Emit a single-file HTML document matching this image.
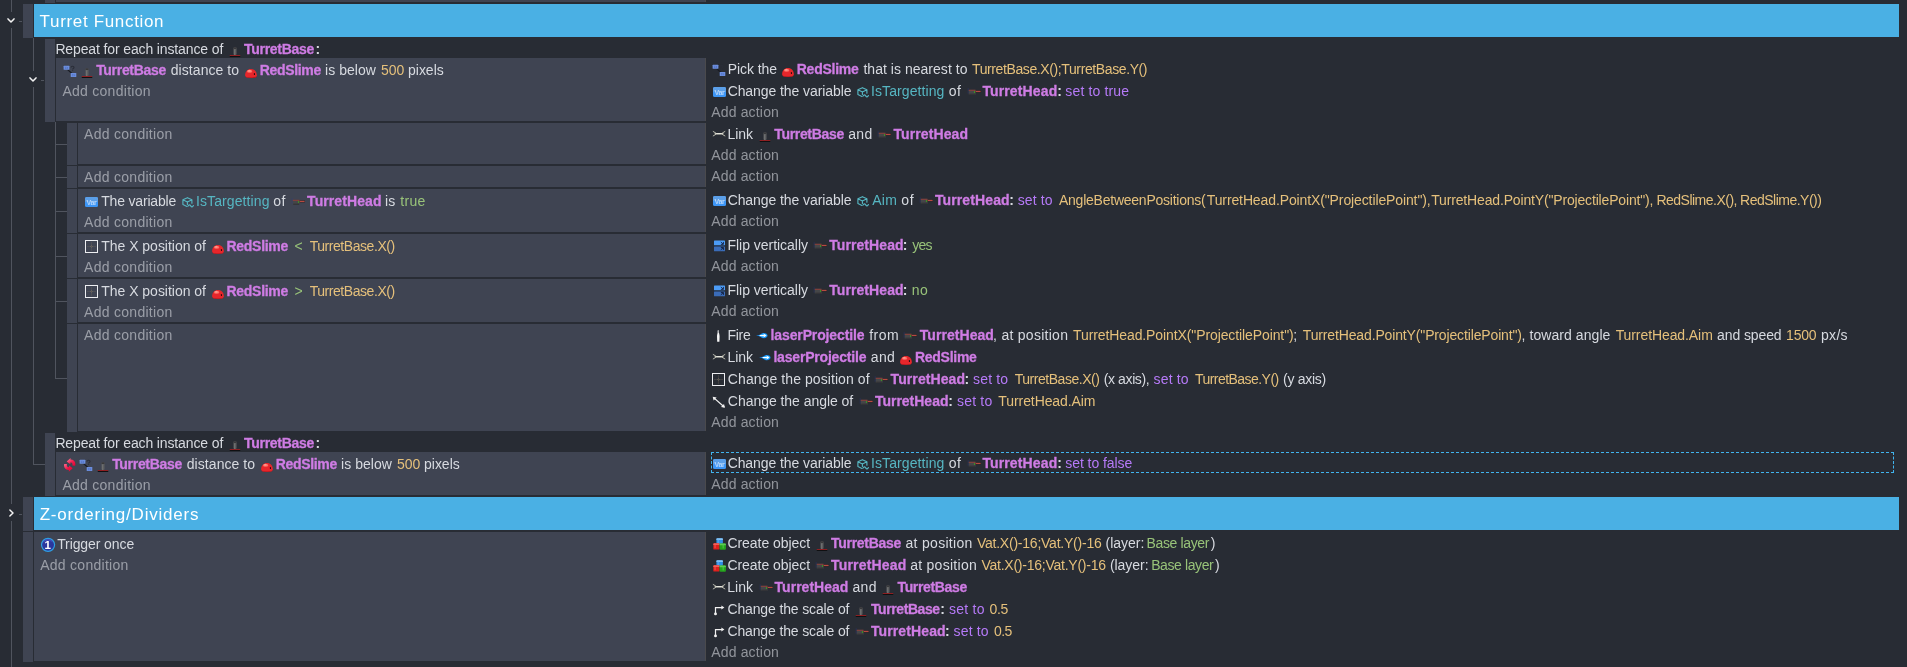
<!DOCTYPE html>
<html lang="en"><head><meta charset="utf-8"><title>Events sheet</title>
<style>
html,body{margin:0;padding:0;}
body{width:1907px;height:667px;overflow:hidden;background:#282c34;position:relative;
 font-family:"Liberation Sans", sans-serif;font-size:14px;color:#d6d9e0;}
.b{position:absolute;}
#t{position:absolute;left:0;top:0;width:1907px;height:667px;will-change:transform;}
.r{position:absolute;height:22px;line-height:22px;white-space:pre;}
.n{color:#d7dae0;}
.o{color:#cf7ce4;font-weight:bold;-webkit-text-stroke:0.3px #cf7ce4;}
.a{color:#d7dae0;opacity:0.6;}
.e{color:#e5c07b;}
.g{color:#98c379;}
.v{color:#56b6c2;}
.p{color:#b67af8;}
.c{color:#d7dae0;font-weight:bold;}
.h{color:#ffffff;font-size:17px;height:34px;line-height:34px;}
.ic{position:absolute;width:16px;height:16px;line-height:0;}
.ic svg{display:block;overflow:visible;}
.ic text{font-family:"Liberation Sans",sans-serif;}
</style></head>
<body>
<div class="b" style="left:11px;top:0px;width:1px;height:12px;background:#50545e;"></div>
<div class="b" style="left:11px;top:28px;width:1px;height:476px;background:#50545e;"></div>
<div class="b" style="left:11px;top:521px;width:1px;height:146px;background:#50545e;"></div>
<div class="b" style="left:19px;top:21px;width:3px;height:1px;background:#50545e;"></div>
<div class="b" style="left:19px;top:514px;width:3px;height:1px;background:#50545e;"></div>
<div class="b" style="left:33px;top:38px;width:1px;height:33px;background:#50545e;"></div>
<div class="b" style="left:33px;top:87px;width:1px;height:377px;background:#50545e;"></div>
<div class="b" style="left:33px;top:464px;width:12px;height:1px;background:#50545e;"></div>
<div class="b" style="left:41px;top:80px;width:3px;height:1px;background:#50545e;"></div>
<div class="b" style="left:55px;top:122px;width:1px;height:256px;background:#50545e;"></div>
<div class="b" style="left:55px;top:144px;width:12px;height:1px;background:#50545e;"></div>
<div class="b" style="left:55px;top:177px;width:12px;height:1px;background:#50545e;"></div>
<div class="b" style="left:55px;top:211px;width:12px;height:1px;background:#50545e;"></div>
<div class="b" style="left:55px;top:256px;width:12px;height:1px;background:#50545e;"></div>
<div class="b" style="left:55px;top:301px;width:12px;height:1px;background:#50545e;"></div>
<div class="b" style="left:55px;top:378px;width:12px;height:1px;background:#50545e;"></div>
<div class="b" style="left:45px;top:0px;width:10px;height:3px;background:#3f4452;"></div>
<div class="b" style="left:56px;top:0px;width:649px;height:2px;background:#3f4452;"></div>
<div class="b" style="left:705px;top:0px;width:1px;height:2px;background:#4a4a4d;"></div>
<div class="b" style="left:23px;top:4px;width:10px;height:34px;background:#3f4452;"></div>
<div class="b" style="left:34px;top:4px;width:1865px;height:33px;background:#4ab0e4;"></div>
<div class="b" style="left:45px;top:39px;width:10px;height:83px;background:#3f4452;"></div>
<div class="b" style="left:56px;top:58px;width:649px;height:63px;background:#3f4452;"></div>
<div class="b" style="left:705px;top:58px;width:1px;height:63px;background:#4a4a4d;"></div>
<div class="b" style="left:67px;top:123px;width:10px;height:42px;background:#3f4452;"></div>
<div class="b" style="left:78px;top:123px;width:627px;height:41px;background:#3f4452;"></div>
<div class="b" style="left:705px;top:123px;width:1px;height:41px;background:#4a4a4d;"></div>
<div class="b" style="left:67px;top:166px;width:10px;height:22px;background:#3f4452;"></div>
<div class="b" style="left:78px;top:166px;width:627px;height:21px;background:#3f4452;"></div>
<div class="b" style="left:705px;top:166px;width:1px;height:21px;background:#4a4a4d;"></div>
<div class="b" style="left:67px;top:189px;width:10px;height:44px;background:#3f4452;"></div>
<div class="b" style="left:78px;top:189px;width:627px;height:43px;background:#3f4452;"></div>
<div class="b" style="left:705px;top:189px;width:1px;height:43px;background:#4a4a4d;"></div>
<div class="b" style="left:67px;top:234px;width:10px;height:44px;background:#3f4452;"></div>
<div class="b" style="left:78px;top:234px;width:627px;height:43px;background:#3f4452;"></div>
<div class="b" style="left:705px;top:234px;width:1px;height:43px;background:#4a4a4d;"></div>
<div class="b" style="left:67px;top:279px;width:10px;height:44px;background:#3f4452;"></div>
<div class="b" style="left:78px;top:279px;width:627px;height:43px;background:#3f4452;"></div>
<div class="b" style="left:705px;top:279px;width:1px;height:43px;background:#4a4a4d;"></div>
<div class="b" style="left:67px;top:324px;width:10px;height:108px;background:#3f4452;"></div>
<div class="b" style="left:78px;top:324px;width:627px;height:107px;background:#3f4452;"></div>
<div class="b" style="left:705px;top:324px;width:1px;height:107px;background:#4a4a4d;"></div>
<div class="b" style="left:45px;top:433px;width:10px;height:63px;background:#3f4452;"></div>
<div class="b" style="left:56px;top:452px;width:649px;height:43px;background:#3f4452;"></div>
<div class="b" style="left:705px;top:452px;width:1px;height:43px;background:#4a4a4d;"></div>
<div class="b" style="left:23px;top:497px;width:10px;height:34px;background:#3f4452;"></div>
<div class="b" style="left:34px;top:497px;width:1865px;height:33px;background:#4ab0e4;"></div>
<div class="b" style="left:23px;top:532px;width:10px;height:130px;background:#3f4452;"></div>
<div class="b" style="left:34px;top:532px;width:671px;height:129px;background:#3f4452;"></div>
<div class="b" style="left:705px;top:532px;width:1px;height:129px;background:#4a4a4d;"></div>
<div class="b" style="left:711px;top:452px;width:1183px;height:21px;border:1px dashed #41b4ee;box-sizing:border-box"></div>
<svg class="b" style="left:0;top:0" width="60" height="667" viewBox="0 0 60 667"><path d="M8 18.9 L11 22.0 L14 18.9" fill="none" stroke="#f2f2f2" stroke-width="1.5" stroke-linecap="round" stroke-linejoin="round"/></svg>
<svg class="b" style="left:0;top:0" width="60" height="667" viewBox="0 0 60 667"><path d="M30 77.9 L33 81.0 L36 77.9" fill="none" stroke="#f2f2f2" stroke-width="1.5" stroke-linecap="round" stroke-linejoin="round"/></svg>
<svg class="b" style="left:0;top:0" width="60" height="667" viewBox="0 0 60 667"><path d="M9.9 510 L13.0 513 L9.9 516" fill="none" stroke="#f2f2f2" stroke-width="1.5" stroke-linecap="round" stroke-linejoin="round"/></svg>
<div id="t">
<span class="r h" style="left:39.62px;top:5px;letter-spacing:0.663px">Turret Function</span>
<span class="r n" style="left:55.38px;top:38px;letter-spacing:-0.128px">Repeat for each instance of</span>
<span class="ic" style="left:227px;top:41px"><svg width="16" height="16" viewBox="0 0 16 16"><rect x="6.5" y="6.3" width="3" height="7.8" rx="1" fill="#5e5f60"/><path d="M6.5 8.1V7.3a1 1 0 0 1 1-1h1a1 1 0 0 1 1 1v0.8z" fill="#38393c"/><rect x="7.1" y="8.4" width="0.9" height="5.6" fill="#707172"/><rect x="2.75" y="14" width="10.5" height="1" fill="#8f1f22"/><rect x="2.75" y="15" width="10.5" height="1" fill="#0f1012"/></svg></span>
<span class="r o" style="left:244.07px;top:38px;letter-spacing:-0.306px">TurretBase</span>
<span class="r c" style="left:315.52px;top:38px;letter-spacing:0px">:</span>
<span class="ic" style="left:711px;top:61px"><svg width="16" height="16" viewBox="0 0 16 16"><path d="M5.6 7.6 L10 11.5" stroke="#191b22" stroke-width="1.25" fill="none"/><rect x="1.6" y="3.8" width="5.8" height="4" rx="0.5" fill="#6c8fde"/><rect x="8.7" y="11.1" width="5.6" height="4" rx="0.5" fill="#6c8fde"/><path d="M2.9 5.3h1.6M2.9 6.5h1.6M5.5 5v1.9" stroke="#4f6fc0" stroke-width="0.7" fill="none"/><path d="M10 12.6h1.6M10 13.8h1.6M12.6 12.3v1.9" stroke="#4f6fc0" stroke-width="0.7" fill="none"/><path d="M9.1 5.4c0-1.6 2.9-1.6 2.9 0c0 1.1-1.4 1-1.4 2.1M10.6 8.2v0.8" stroke="#2b2e38" stroke-width="1.15" fill="none"/></svg></span>
<span class="r n" style="left:727.67px;top:58px;letter-spacing:-0.057px">Pick the</span>
<span class="ic" style="left:780px;top:61px"><svg width="16" height="16" viewBox="0 0 16 16"><path d="M2.1 13.6c0-4.3 2.5-6.7 5.9-6.7s5.9 2.4 5.9 6.7c0 1.7-2.4 2.5-5.9 2.5s-5.9-0.8-5.9-2.5z" fill="#e7262b"/><path d="M2.2 14c0.7 1.1 2.9 1.5 5.8 1.5s5.1-0.4 5.8-1.5c-0.2 1.5-2.5 2.1-5.8 2.1s-5.6-0.6-5.8-2.1z" fill="#b3121a"/><ellipse cx="6.6" cy="9.3" rx="2.7" ry="1.5" fill="#ff6f66"/><ellipse cx="6.3" cy="8.9" rx="1.4" ry="0.7" fill="#ffa79b"/><rect x="10.9" y="11" width="1.1" height="2.1" rx="0.5" fill="#2c0a10"/></svg></span>
<span class="r o" style="left:796.73px;top:58px;letter-spacing:-0.243px">RedSlime</span>
<span class="r n" style="left:863.45px;top:58px;letter-spacing:0.028px">that is nearest to</span>
<span class="r e" style="left:972.05px;top:58px;letter-spacing:-0.392px">TurretBase.X();TurretBase.Y()</span>
<span class="ic" style="left:62px;top:62px"><svg width="16" height="16" viewBox="0 0 16 16"><path d="M5.6 7.6 L10 11.5" stroke="#191b22" stroke-width="1.25" fill="none"/><rect x="1.6" y="3.8" width="5.8" height="4" rx="0.5" fill="#6c8fde"/><rect x="8.7" y="11.1" width="5.6" height="4" rx="0.5" fill="#6c8fde"/><path d="M2.9 5.3h1.6M2.9 6.5h1.6M5.5 5v1.9" stroke="#4f6fc0" stroke-width="0.7" fill="none"/><path d="M10 12.6h1.6M10 13.8h1.6M12.6 12.3v1.9" stroke="#4f6fc0" stroke-width="0.7" fill="none"/><path d="M9.1 5.4c0-1.6 2.9-1.6 2.9 0c0 1.1-1.4 1-1.4 2.1M10.6 8.2v0.8" stroke="#2b2e38" stroke-width="1.15" fill="none"/></svg></span>
<span class="ic" style="left:79px;top:62px"><svg width="16" height="16" viewBox="0 0 16 16"><rect x="6.5" y="6.3" width="3" height="7.8" rx="1" fill="#5e5f60"/><path d="M6.5 8.1V7.3a1 1 0 0 1 1-1h1a1 1 0 0 1 1 1v0.8z" fill="#38393c"/><rect x="7.1" y="8.4" width="0.9" height="5.6" fill="#707172"/><rect x="2.75" y="14" width="10.5" height="1" fill="#8f1f22"/><rect x="2.75" y="15" width="10.5" height="1" fill="#0f1012"/></svg></span>
<span class="r o" style="left:96.17px;top:59px;letter-spacing:-0.306px">TurretBase</span>
<span class="r n" style="left:170.78px;top:59px;letter-spacing:0.06px">distance to</span>
<span class="ic" style="left:243px;top:62px"><svg width="16" height="16" viewBox="0 0 16 16"><path d="M2.1 13.6c0-4.3 2.5-6.7 5.9-6.7s5.9 2.4 5.9 6.7c0 1.7-2.4 2.5-5.9 2.5s-5.9-0.8-5.9-2.5z" fill="#e7262b"/><path d="M2.2 14c0.7 1.1 2.9 1.5 5.8 1.5s5.1-0.4 5.8-1.5c-0.2 1.5-2.5 2.1-5.8 2.1s-5.6-0.6-5.8-2.1z" fill="#b3121a"/><ellipse cx="6.6" cy="9.3" rx="2.7" ry="1.5" fill="#ff6f66"/><ellipse cx="6.3" cy="8.9" rx="1.4" ry="0.7" fill="#ffa79b"/><rect x="10.9" y="11" width="1.1" height="2.1" rx="0.5" fill="#2c0a10"/></svg></span>
<span class="r o" style="left:259.82px;top:59px;letter-spacing:-0.343px">RedSlime</span>
<span class="r n" style="left:325.12px;top:59px;letter-spacing:0.036px">is below</span>
<span class="r e" style="left:380.88px;top:59px;letter-spacing:0.025px">500</span>
<span class="r n" style="left:408.02px;top:59px;letter-spacing:-0.015px">pixels</span>
<span class="r a" style="left:62.38px;top:80px;letter-spacing:0.277px">Add condition</span>
<span class="ic" style="left:712px;top:83px"><svg width="16" height="16" viewBox="0 0 16 16"><rect x="1" y="4" width="13" height="10" rx="1.5" fill="#3d96f6"/><path d="M1 9V5.5a1.5 1.5 0 0 1 1.5-1.5h10a1.5 1.5 0 0 1 1.5 1.5v3.5z" fill="#5b9fe8"/><text x="7.5" y="12" font-size="7" font-weight="bold" text-anchor="middle" fill="#d2e5fc" fill-opacity="0.8" letter-spacing="-0.3">Var</text></svg></span>
<span class="r n" style="left:727.65px;top:80px;letter-spacing:-0.083px">Change the variable</span>
<span class="ic" style="left:855px;top:83px"><svg width="16" height="16" viewBox="0 0 16 16"><g fill="none" stroke="#56b6c2" stroke-width="1.15" stroke-linejoin="round" stroke-linecap="round"><path d="M7.4 4.7 L11.9 6.8 L11.9 10.2 M7.4 4.7 L2.9 6.8 L2.9 11.6 L6.9 13.5 M2.9 6.8 L7.4 8.9 L11.9 6.8 M7.4 8.9 L7.4 11.4"/><path d="M7.9 13.2c1-1.7 1.9-1.7 2.8-0.3s1.8 1.3 2.7-0.4"/></g></svg></span>
<span class="r v" style="left:871.05px;top:80px;letter-spacing:0.086px">IsTargetting</span>
<span class="r n" style="left:948.66px;top:80px;letter-spacing:0.6px">of</span>
<span class="ic" style="left:966px;top:83px"><svg width="16" height="16" viewBox="0 0 16 16"><path d="M2.2 5.6v5.6" stroke="#2d3a9a" stroke-width="1" stroke-dasharray="1 0.9" fill="none" opacity="0.6"/><rect x="2.8" y="6.8" width="6.8" height="4.9" rx="0.5" fill="#454648"/><rect x="2.8" y="6.8" width="6.8" height="1" fill="#8e3f3a"/><rect x="3.2" y="10.7" width="6" height="1" fill="#2f3033"/><rect x="8" y="8" width="1.2" height="2" fill="#3b8f27"/><rect x="9.6" y="7.5" width="5.3" height="1.9" fill="#1b1c20"/><rect x="9.6" y="7.8" width="5" height="1.3" fill="#b84a40"/></svg></span>
<span class="r o" style="left:982.38px;top:80px;letter-spacing:0.131px">TurretHead</span>
<span class="r c" style="left:1057.33px;top:80px;letter-spacing:0px">:</span>
<span class="r p" style="left:1065.33px;top:80px;letter-spacing:0.145px">set to true</span>
<span class="r a" style="left:711.17px;top:101px;letter-spacing:0.175px">Add action</span>
<span class="r a" style="left:84.08px;top:123px;letter-spacing:0.277px">Add condition</span>
<span class="ic" style="left:711px;top:126px"><svg width="16" height="16" viewBox="0 0 16 16"><g fill="none" stroke="#bdbdb1" stroke-width="0.95" stroke-linecap="round" stroke-linejoin="round"><path d="M2.2 5.5 L4.6 6.9 M2.2 9.9 L4.6 8.5 M13.9 5.5 L11.5 6.9 M13.9 9.9 L11.5 8.5"/></g><path d="M4.3 7.7 H11.8" stroke="#cacabe" stroke-width="1.6" stroke-linecap="round" fill="none"/><path d="M5.4 7.6 H10.7" stroke="#f2f2ea" stroke-width="0.8" fill="none"/></svg></span>
<span class="r n" style="left:727.48px;top:123px;letter-spacing:-0.033px">Link</span>
<span class="ic" style="left:757px;top:126px"><svg width="16" height="16" viewBox="0 0 16 16"><rect x="6.5" y="6.3" width="3" height="7.8" rx="1" fill="#5e5f60"/><path d="M6.5 8.1V7.3a1 1 0 0 1 1-1h1a1 1 0 0 1 1 1v0.8z" fill="#38393c"/><rect x="7.1" y="8.4" width="0.9" height="5.6" fill="#707172"/><rect x="2.75" y="14" width="10.5" height="1" fill="#8f1f22"/><rect x="2.75" y="15" width="10.5" height="1" fill="#0f1012"/></svg></span>
<span class="r o" style="left:774.27px;top:123px;letter-spacing:-0.328px">TurretBase</span>
<span class="r n" style="left:848.17px;top:123px;letter-spacing:0.363px">and</span>
<span class="ic" style="left:876px;top:126px"><svg width="16" height="16" viewBox="0 0 16 16"><path d="M2.2 5.6v5.6" stroke="#2d3a9a" stroke-width="1" stroke-dasharray="1 0.9" fill="none" opacity="0.6"/><rect x="2.8" y="6.8" width="6.8" height="4.9" rx="0.5" fill="#454648"/><rect x="2.8" y="6.8" width="6.8" height="1" fill="#8e3f3a"/><rect x="3.2" y="10.7" width="6" height="1" fill="#2f3033"/><rect x="8" y="8" width="1.2" height="2" fill="#3b8f27"/><rect x="9.6" y="7.5" width="5.3" height="1.9" fill="#1b1c20"/><rect x="9.6" y="7.8" width="5" height="1.3" fill="#b84a40"/></svg></span>
<span class="r o" style="left:893.38px;top:123px;letter-spacing:0.108px">TurretHead</span>
<span class="r a" style="left:711.17px;top:144px;letter-spacing:0.175px">Add action</span>
<span class="r a" style="left:711.17px;top:165px;letter-spacing:0.175px">Add action</span>
<span class="r a" style="left:84.08px;top:166px;letter-spacing:0.277px">Add condition</span>
<span class="ic" style="left:712px;top:192px"><svg width="16" height="16" viewBox="0 0 16 16"><rect x="1" y="4" width="13" height="10" rx="1.5" fill="#3d96f6"/><path d="M1 9V5.5a1.5 1.5 0 0 1 1.5-1.5h10a1.5 1.5 0 0 1 1.5 1.5v3.5z" fill="#5b9fe8"/><text x="7.5" y="12" font-size="7" font-weight="bold" text-anchor="middle" fill="#d2e5fc" fill-opacity="0.8" letter-spacing="-0.3">Var</text></svg></span>
<span class="r n" style="left:727.65px;top:189px;letter-spacing:-0.083px">Change the variable</span>
<span class="ic" style="left:855px;top:192px"><svg width="16" height="16" viewBox="0 0 16 16"><g fill="none" stroke="#56b6c2" stroke-width="1.15" stroke-linejoin="round" stroke-linecap="round"><path d="M7.4 4.7 L11.9 6.8 L11.9 10.2 M7.4 4.7 L2.9 6.8 L2.9 11.6 L6.9 13.5 M2.9 6.8 L7.4 8.9 L11.9 6.8 M7.4 8.9 L7.4 11.4"/><path d="M7.9 13.2c1-1.7 1.9-1.7 2.8-0.3s1.8 1.3 2.7-0.4"/></g></svg></span>
<span class="r v" style="left:872.17px;top:189px;letter-spacing:0.288px">Aim</span>
<span class="r n" style="left:901.26px;top:189px;letter-spacing:0.6px">of</span>
<span class="ic" style="left:918px;top:192px"><svg width="16" height="16" viewBox="0 0 16 16"><path d="M2.2 5.6v5.6" stroke="#2d3a9a" stroke-width="1" stroke-dasharray="1 0.9" fill="none" opacity="0.6"/><rect x="2.8" y="6.8" width="6.8" height="4.9" rx="0.5" fill="#454648"/><rect x="2.8" y="6.8" width="6.8" height="1" fill="#8e3f3a"/><rect x="3.2" y="10.7" width="6" height="1" fill="#2f3033"/><rect x="8" y="8" width="1.2" height="2" fill="#3b8f27"/><rect x="9.6" y="7.5" width="5.3" height="1.9" fill="#1b1c20"/><rect x="9.6" y="7.8" width="5" height="1.3" fill="#b84a40"/></svg></span>
<span class="r o" style="left:934.88px;top:189px;letter-spacing:0.119px">TurretHead</span>
<span class="r c" style="left:1009.33px;top:189px;letter-spacing:0px">:</span>
<span class="r p" style="left:1017.73px;top:189px;letter-spacing:0.13px">set to</span>
<span class="r e" style="left:1058.97px;top:189px;letter-spacing:-0.238px">AngleBetweenPositions(</span>
<span class="r e" style="left:1206.75px;top:189px;letter-spacing:-0.115px">TurretHead.PointX("ProjectilePoint"),</span>
<span class="r e" style="left:1431.25px;top:189px;letter-spacing:-0.162px">TurretHead.PointY("ProjectilePoint"),</span>
<span class="r e" style="left:1656.38px;top:189px;letter-spacing:-0.504px">RedSlime.X(),</span>
<span class="r e" style="left:1740.08px;top:189px;letter-spacing:-0.506px">RedSlime.Y())</span>
<span class="ic" style="left:84px;top:193px"><svg width="16" height="16" viewBox="0 0 16 16"><rect x="1" y="4" width="13" height="10" rx="1.5" fill="#3d96f6"/><path d="M1 9V5.5a1.5 1.5 0 0 1 1.5-1.5h10a1.5 1.5 0 0 1 1.5 1.5v3.5z" fill="#5b9fe8"/><text x="7.5" y="12" font-size="7" font-weight="bold" text-anchor="middle" fill="#d2e5fc" fill-opacity="0.8" letter-spacing="-0.3">Var</text></svg></span>
<span class="r n" style="left:101.25px;top:190px;letter-spacing:-0.184px">The variable</span>
<span class="ic" style="left:180px;top:193px"><svg width="16" height="16" viewBox="0 0 16 16"><g fill="none" stroke="#56b6c2" stroke-width="1.15" stroke-linejoin="round" stroke-linecap="round"><path d="M7.4 4.7 L11.9 6.8 L11.9 10.2 M7.4 4.7 L2.9 6.8 L2.9 11.6 L6.9 13.5 M2.9 6.8 L7.4 8.9 L11.9 6.8 M7.4 8.9 L7.4 11.4"/><path d="M7.9 13.2c1-1.7 1.9-1.7 2.8-0.3s1.8 1.3 2.7-0.4"/></g></svg></span>
<span class="r v" style="left:195.95px;top:190px;letter-spacing:0.105px">IsTargetting</span>
<span class="r n" style="left:273.21px;top:190px;letter-spacing:0.6px">of</span>
<span class="ic" style="left:290px;top:193px"><svg width="16" height="16" viewBox="0 0 16 16"><path d="M2.2 5.6v5.6" stroke="#2d3a9a" stroke-width="1" stroke-dasharray="1 0.9" fill="none" opacity="0.6"/><rect x="2.8" y="6.8" width="6.8" height="4.9" rx="0.5" fill="#454648"/><rect x="2.8" y="6.8" width="6.8" height="1" fill="#8e3f3a"/><rect x="3.2" y="10.7" width="6" height="1" fill="#2f3033"/><rect x="8" y="8" width="1.2" height="2" fill="#3b8f27"/><rect x="9.6" y="7.5" width="5.3" height="1.9" fill="#1b1c20"/><rect x="9.6" y="7.8" width="5" height="1.3" fill="#b84a40"/></svg></span>
<span class="r o" style="left:307.07px;top:190px;letter-spacing:0.086px">TurretHead</span>
<span class="r n" style="left:385.12px;top:190px;letter-spacing:0.15px">is</span>
<span class="r g" style="left:400.35px;top:190px;letter-spacing:0.283px">true</span>
<span class="r a" style="left:711.17px;top:210px;letter-spacing:0.175px">Add action</span>
<span class="r a" style="left:84.08px;top:211px;letter-spacing:0.277px">Add condition</span>
<span class="ic" style="left:711px;top:237px"><svg width="16" height="16" viewBox="0 0 16 16"><rect x="3" y="3.4" width="11" height="5.2" rx="0.6" fill="#4c9cf6"/><rect x="3" y="9.2" width="11" height="5.1" rx="0.6" fill="#3a6cb8"/><path d="M9.8 5 L12.1 7 M12.4 4.9v2.5h-2.5" stroke="#1a2c52" stroke-width="1" fill="none"/><path d="M9.8 12.8 L12.1 10.8 M12.4 12.9v-2.5h-2.5" stroke="#14213f" stroke-width="1" fill="none"/><rect x="3" y="8.5" width="11" height="0.8" fill="#1d2636"/></svg></span>
<span class="r n" style="left:727.48px;top:234px;letter-spacing:-0.025px">Flip vertically</span>
<span class="ic" style="left:812px;top:237px"><svg width="16" height="16" viewBox="0 0 16 16"><path d="M2.2 5.6v5.6" stroke="#2d3a9a" stroke-width="1" stroke-dasharray="1 0.9" fill="none" opacity="0.6"/><rect x="2.8" y="6.8" width="6.8" height="4.9" rx="0.5" fill="#454648"/><rect x="2.8" y="6.8" width="6.8" height="1" fill="#8e3f3a"/><rect x="3.2" y="10.7" width="6" height="1" fill="#2f3033"/><rect x="8" y="8" width="1.2" height="2" fill="#3b8f27"/><rect x="9.6" y="7.5" width="5.3" height="1.9" fill="#1b1c20"/><rect x="9.6" y="7.8" width="5" height="1.3" fill="#b84a40"/></svg></span>
<span class="r o" style="left:829.17px;top:234px;letter-spacing:0.086px">TurretHead</span>
<span class="r c" style="left:902.73px;top:234px;letter-spacing:0px">:</span>
<span class="r g" style="left:912.2px;top:234px;letter-spacing:-0.775px">yes</span>
<span class="ic" style="left:84px;top:238px"><svg width="16" height="16" viewBox="0 0 16 16"><rect x="1.5" y="2.5" width="12" height="12" fill="none" stroke="#ecedf0" stroke-width="1"/><path d="M7.5 4v9M3 8.5h9" stroke="#6b655c" stroke-width="0.7" fill="none" opacity="0.5"/><rect x="6.85" y="7.85" width="1.3" height="1.3" fill="none" stroke="#857b6a" stroke-width="0.5" transform="rotate(45 7.5 8.5)"/></svg></span>
<span class="r n" style="left:101.25px;top:235px;letter-spacing:-0.023px">The X position of</span>
<span class="ic" style="left:210px;top:238px"><svg width="16" height="16" viewBox="0 0 16 16"><path d="M2.1 13.6c0-4.3 2.5-6.7 5.9-6.7s5.9 2.4 5.9 6.7c0 1.7-2.4 2.5-5.9 2.5s-5.9-0.8-5.9-2.5z" fill="#e7262b"/><path d="M2.2 14c0.7 1.1 2.9 1.5 5.8 1.5s5.1-0.4 5.8-1.5c-0.2 1.5-2.5 2.1-5.8 2.1s-5.6-0.6-5.8-2.1z" fill="#b3121a"/><ellipse cx="6.6" cy="9.3" rx="2.7" ry="1.5" fill="#ff6f66"/><ellipse cx="6.3" cy="8.9" rx="1.4" ry="0.7" fill="#ffa79b"/><rect x="10.9" y="11" width="1.1" height="2.1" rx="0.5" fill="#2c0a10"/></svg></span>
<span class="r o" style="left:226.53px;top:235px;letter-spacing:-0.286px">RedSlime</span>
<span class="r g" style="left:294.57px;top:235px;letter-spacing:0px">&lt;</span>
<span class="r e" style="left:309.65px;top:235px;letter-spacing:-0.44px">TurretBase.X()</span>
<span class="r a" style="left:711.17px;top:255px;letter-spacing:0.175px">Add action</span>
<span class="r a" style="left:84.08px;top:256px;letter-spacing:0.277px">Add condition</span>
<span class="ic" style="left:711px;top:282px"><svg width="16" height="16" viewBox="0 0 16 16"><rect x="3" y="3.4" width="11" height="5.2" rx="0.6" fill="#4c9cf6"/><rect x="3" y="9.2" width="11" height="5.1" rx="0.6" fill="#3a6cb8"/><path d="M9.8 5 L12.1 7 M12.4 4.9v2.5h-2.5" stroke="#1a2c52" stroke-width="1" fill="none"/><path d="M9.8 12.8 L12.1 10.8 M12.4 12.9v-2.5h-2.5" stroke="#14213f" stroke-width="1" fill="none"/><rect x="3" y="8.5" width="11" height="0.8" fill="#1d2636"/></svg></span>
<span class="r n" style="left:727.48px;top:279px;letter-spacing:-0.025px">Flip vertically</span>
<span class="ic" style="left:812px;top:282px"><svg width="16" height="16" viewBox="0 0 16 16"><path d="M2.2 5.6v5.6" stroke="#2d3a9a" stroke-width="1" stroke-dasharray="1 0.9" fill="none" opacity="0.6"/><rect x="2.8" y="6.8" width="6.8" height="4.9" rx="0.5" fill="#454648"/><rect x="2.8" y="6.8" width="6.8" height="1" fill="#8e3f3a"/><rect x="3.2" y="10.7" width="6" height="1" fill="#2f3033"/><rect x="8" y="8" width="1.2" height="2" fill="#3b8f27"/><rect x="9.6" y="7.5" width="5.3" height="1.9" fill="#1b1c20"/><rect x="9.6" y="7.8" width="5" height="1.3" fill="#b84a40"/></svg></span>
<span class="r o" style="left:829.17px;top:279px;letter-spacing:0.086px">TurretHead</span>
<span class="r c" style="left:902.73px;top:279px;letter-spacing:0px">:</span>
<span class="r g" style="left:911.71px;top:279px;letter-spacing:0.6px">no</span>
<span class="ic" style="left:84px;top:283px"><svg width="16" height="16" viewBox="0 0 16 16"><rect x="1.5" y="2.5" width="12" height="12" fill="none" stroke="#ecedf0" stroke-width="1"/><path d="M7.5 4v9M3 8.5h9" stroke="#6b655c" stroke-width="0.7" fill="none" opacity="0.5"/><rect x="6.85" y="7.85" width="1.3" height="1.3" fill="none" stroke="#857b6a" stroke-width="0.5" transform="rotate(45 7.5 8.5)"/></svg></span>
<span class="r n" style="left:101.25px;top:280px;letter-spacing:-0.023px">The X position of</span>
<span class="ic" style="left:210px;top:283px"><svg width="16" height="16" viewBox="0 0 16 16"><path d="M2.1 13.6c0-4.3 2.5-6.7 5.9-6.7s5.9 2.4 5.9 6.7c0 1.7-2.4 2.5-5.9 2.5s-5.9-0.8-5.9-2.5z" fill="#e7262b"/><path d="M2.2 14c0.7 1.1 2.9 1.5 5.8 1.5s5.1-0.4 5.8-1.5c-0.2 1.5-2.5 2.1-5.8 2.1s-5.6-0.6-5.8-2.1z" fill="#b3121a"/><ellipse cx="6.6" cy="9.3" rx="2.7" ry="1.5" fill="#ff6f66"/><ellipse cx="6.3" cy="8.9" rx="1.4" ry="0.7" fill="#ffa79b"/><rect x="10.9" y="11" width="1.1" height="2.1" rx="0.5" fill="#2c0a10"/></svg></span>
<span class="r o" style="left:226.53px;top:280px;letter-spacing:-0.286px">RedSlime</span>
<span class="r g" style="left:294.57px;top:280px;letter-spacing:0px">&gt;</span>
<span class="r e" style="left:309.65px;top:280px;letter-spacing:-0.44px">TurretBase.X()</span>
<span class="r a" style="left:711.17px;top:300px;letter-spacing:0.175px">Add action</span>
<span class="r a" style="left:84.08px;top:301px;letter-spacing:0.277px">Add condition</span>
<span class="r a" style="left:84.08px;top:324px;letter-spacing:0.277px">Add condition</span>
<span class="ic" style="left:710px;top:327px"><svg width="16" height="16" viewBox="0 0 16 16"><path d="M7.2 14.8 L7 9.5 C7 7.6 7.5 6.4 7.7 5.4 L7.7 3.6 L8.9 3.6 L8.9 5.4 C9.1 6.4 9.6 7.6 9.6 9.5 L9.4 14.8 Z" fill="#f6f6f6"/><rect x="7.7" y="3.4" width="1.2" height="2.4" fill="#a9abb0"/></svg></span>
<span class="r n" style="left:727.48px;top:324px;letter-spacing:-0.258px">Fire</span>
<span class="ic" style="left:755px;top:327px"><svg width="16" height="16" viewBox="0 0 16 16"><path d="M1 8.5 C3 8.3 4.6 7.9 5.6 7.2 C6.6 6.4 7.6 5.9 9 5.9 C11.2 5.9 12.6 7.2 12.6 8.55 C12.6 9.9 11.2 11.2 9 11.2 C7.6 11.2 6.6 10.7 5.6 9.9 C4.6 9.2 3 8.8 1 8.5 Z" fill="#118af0"/><path d="M3.4 8.55 C5 8.4 6 7.6 7 7.2 C7.8 6.9 8.4 6.8 9 6.8 C10.6 6.8 11.7 7.7 11.7 8.55 C11.7 9.4 10.6 10.3 9 10.3 C8.4 10.3 7.8 10.2 7 9.9 C6 9.5 5 8.7 3.4 8.55 Z" fill="#3bb4ff"/><path d="M4.6 8.55 H9.6" stroke="#ffffff" stroke-width="1.1" fill="none"/><path d="M8.4 6.6 L11.5 8.55 L8.4 10.5 L9.2 8.55 Z" fill="#ffffff"/></svg></span>
<span class="r o" style="left:770.6px;top:324px;letter-spacing:-0.132px">laserProjectile</span>
<span class="r n" style="left:869.17px;top:324px;letter-spacing:0.5px">from</span>
<span class="ic" style="left:902px;top:327px"><svg width="16" height="16" viewBox="0 0 16 16"><path d="M2.2 5.6v5.6" stroke="#2d3a9a" stroke-width="1" stroke-dasharray="1 0.9" fill="none" opacity="0.6"/><rect x="2.8" y="6.8" width="6.8" height="4.9" rx="0.5" fill="#454648"/><rect x="2.8" y="6.8" width="6.8" height="1" fill="#8e3f3a"/><rect x="3.2" y="10.7" width="6" height="1" fill="#2f3033"/><rect x="8" y="8" width="1.2" height="2" fill="#3b8f27"/><rect x="9.6" y="7.5" width="5.3" height="1.9" fill="#1b1c20"/><rect x="9.6" y="7.8" width="5" height="1.3" fill="#b84a40"/></svg></span>
<span class="r o" style="left:919.77px;top:324px;letter-spacing:0.053px">TurretHead</span>
<span class="r n" style="left:993.05px;top:324px;letter-spacing:0.275px">, at position</span>
<span class="r e" style="left:1073.05px;top:324px;letter-spacing:-0.101px">TurretHead.PointX("ProjectilePoint")</span>
<span class="r n" style="left:1293.35px;top:324px;letter-spacing:0px">;</span>
<span class="r e" style="left:1302.75px;top:324px;letter-spacing:-0.141px">TurretHead.PointY("ProjectilePoint")</span>
<span class="r n" style="left:1521.55px;top:324px;letter-spacing:0.067px">, toward angle</span>
<span class="r e" style="left:1615.65px;top:324px;letter-spacing:-0.087px">TurretHead.Aim</span>
<span class="r n" style="left:1717.08px;top:324px;letter-spacing:-0.109px">and speed</span>
<span class="r e" style="left:1786.1px;top:324px;letter-spacing:-0.242px">1500</span>
<span class="r n" style="left:1821.03px;top:324px;letter-spacing:0.308px">px/s</span>
<span class="ic" style="left:711px;top:349px"><svg width="16" height="16" viewBox="0 0 16 16"><g fill="none" stroke="#bdbdb1" stroke-width="0.95" stroke-linecap="round" stroke-linejoin="round"><path d="M2.2 5.5 L4.6 6.9 M2.2 9.9 L4.6 8.5 M13.9 5.5 L11.5 6.9 M13.9 9.9 L11.5 8.5"/></g><path d="M4.3 7.7 H11.8" stroke="#cacabe" stroke-width="1.6" stroke-linecap="round" fill="none"/><path d="M5.4 7.6 H10.7" stroke="#f2f2ea" stroke-width="0.8" fill="none"/></svg></span>
<span class="r n" style="left:727.48px;top:346px;letter-spacing:-0.033px">Link</span>
<span class="ic" style="left:758px;top:349px"><svg width="16" height="16" viewBox="0 0 16 16"><path d="M1 8.5 C3 8.3 4.6 7.9 5.6 7.2 C6.6 6.4 7.6 5.9 9 5.9 C11.2 5.9 12.6 7.2 12.6 8.55 C12.6 9.9 11.2 11.2 9 11.2 C7.6 11.2 6.6 10.7 5.6 9.9 C4.6 9.2 3 8.8 1 8.5 Z" fill="#118af0"/><path d="M3.4 8.55 C5 8.4 6 7.6 7 7.2 C7.8 6.9 8.4 6.8 9 6.8 C10.6 6.8 11.7 7.7 11.7 8.55 C11.7 9.4 10.6 10.3 9 10.3 C8.4 10.3 7.8 10.2 7 9.9 C6 9.5 5 8.7 3.4 8.55 Z" fill="#3bb4ff"/><path d="M4.6 8.55 H9.6" stroke="#ffffff" stroke-width="1.1" fill="none"/><path d="M8.4 6.6 L11.5 8.55 L8.4 10.5 L9.2 8.55 Z" fill="#ffffff"/></svg></span>
<span class="r o" style="left:773.4px;top:346px;letter-spacing:-0.189px">laserProjectile</span>
<span class="r n" style="left:870.77px;top:346px;letter-spacing:0.363px">and</span>
<span class="ic" style="left:898px;top:349px"><svg width="16" height="16" viewBox="0 0 16 16"><path d="M2.1 13.6c0-4.3 2.5-6.7 5.9-6.7s5.9 2.4 5.9 6.7c0 1.7-2.4 2.5-5.9 2.5s-5.9-0.8-5.9-2.5z" fill="#e7262b"/><path d="M2.2 14c0.7 1.1 2.9 1.5 5.8 1.5s5.1-0.4 5.8-1.5c-0.2 1.5-2.5 2.1-5.8 2.1s-5.6-0.6-5.8-2.1z" fill="#b3121a"/><ellipse cx="6.6" cy="9.3" rx="2.7" ry="1.5" fill="#ff6f66"/><ellipse cx="6.3" cy="8.9" rx="1.4" ry="0.7" fill="#ffa79b"/><rect x="10.9" y="11" width="1.1" height="2.1" rx="0.5" fill="#2c0a10"/></svg></span>
<span class="r o" style="left:914.92px;top:346px;letter-spacing:-0.257px">RedSlime</span>
<span class="ic" style="left:711px;top:371px"><svg width="16" height="16" viewBox="0 0 16 16"><rect x="1.5" y="2.5" width="12" height="12" fill="none" stroke="#ecedf0" stroke-width="1"/><path d="M7.5 4v9M3 8.5h9" stroke="#6b655c" stroke-width="0.7" fill="none" opacity="0.5"/><rect x="6.85" y="7.85" width="1.3" height="1.3" fill="none" stroke="#857b6a" stroke-width="0.5" transform="rotate(45 7.5 8.5)"/></svg></span>
<span class="r n" style="left:727.85px;top:368px;letter-spacing:0.077px">Change the position of</span>
<span class="ic" style="left:873px;top:371px"><svg width="16" height="16" viewBox="0 0 16 16"><path d="M2.2 5.6v5.6" stroke="#2d3a9a" stroke-width="1" stroke-dasharray="1 0.9" fill="none" opacity="0.6"/><rect x="2.8" y="6.8" width="6.8" height="4.9" rx="0.5" fill="#454648"/><rect x="2.8" y="6.8" width="6.8" height="1" fill="#8e3f3a"/><rect x="3.2" y="10.7" width="6" height="1" fill="#2f3033"/><rect x="8" y="8" width="1.2" height="2" fill="#3b8f27"/><rect x="9.6" y="7.5" width="5.3" height="1.9" fill="#1b1c20"/><rect x="9.6" y="7.8" width="5" height="1.3" fill="#b84a40"/></svg></span>
<span class="r o" style="left:890.58px;top:368px;letter-spacing:0.086px">TurretHead</span>
<span class="r c" style="left:964.62px;top:368px;letter-spacing:0px">:</span>
<span class="r p" style="left:973.12px;top:368px;letter-spacing:0.15px">set to</span>
<span class="r e" style="left:1014.65px;top:368px;letter-spacing:-0.463px">TurretBase.X()</span>
<span class="r n" style="left:1103.72px;top:368px;letter-spacing:-0.384px">(x axis),</span>
<span class="r p" style="left:1153.62px;top:368px;letter-spacing:0.13px">set to</span>
<span class="r e" style="left:1194.95px;top:368px;letter-spacing:-0.54px">TurretBase.Y()</span>
<span class="r n" style="left:1283.03px;top:368px;letter-spacing:-0.268px">(y axis)</span>
<span class="ic" style="left:711px;top:393px"><svg width="16" height="16" viewBox="0 0 16 16"><g stroke="#f1f1f1" fill="none" stroke-width="1.25" stroke-linecap="round" stroke-linejoin="round"><path d="M2.6 4.6 L13 13.8"/></g><path d="M1.7 3.7 L5.6 4.4 L2.6 7.4 Z" fill="#f1f1f1"/><path d="M13.9 14.7 L10 14 L13 11 Z" fill="#f1f1f1"/></svg></span>
<span class="r n" style="left:727.85px;top:390px;letter-spacing:-0.038px">Change the angle of</span>
<span class="ic" style="left:858px;top:393px"><svg width="16" height="16" viewBox="0 0 16 16"><path d="M2.2 5.6v5.6" stroke="#2d3a9a" stroke-width="1" stroke-dasharray="1 0.9" fill="none" opacity="0.6"/><rect x="2.8" y="6.8" width="6.8" height="4.9" rx="0.5" fill="#454648"/><rect x="2.8" y="6.8" width="6.8" height="1" fill="#8e3f3a"/><rect x="3.2" y="10.7" width="6" height="1" fill="#2f3033"/><rect x="8" y="8" width="1.2" height="2" fill="#3b8f27"/><rect x="9.6" y="7.5" width="5.3" height="1.9" fill="#1b1c20"/><rect x="9.6" y="7.8" width="5" height="1.3" fill="#b84a40"/></svg></span>
<span class="r o" style="left:874.88px;top:390px;letter-spacing:-0.003px">TurretHead</span>
<span class="r c" style="left:948.33px;top:390px;letter-spacing:0px">:</span>
<span class="r p" style="left:957.12px;top:390px;letter-spacing:0.17px">set to</span>
<span class="r e" style="left:998.35px;top:390px;letter-spacing:-0.087px">TurretHead.Aim</span>
<span class="r a" style="left:711.17px;top:411px;letter-spacing:0.175px">Add action</span>
<span class="r n" style="left:55.38px;top:432px;letter-spacing:-0.128px">Repeat for each instance of</span>
<span class="ic" style="left:227px;top:435px"><svg width="16" height="16" viewBox="0 0 16 16"><rect x="6.5" y="6.3" width="3" height="7.8" rx="1" fill="#5e5f60"/><path d="M6.5 8.1V7.3a1 1 0 0 1 1-1h1a1 1 0 0 1 1 1v0.8z" fill="#38393c"/><rect x="7.1" y="8.4" width="0.9" height="5.6" fill="#707172"/><rect x="2.75" y="14" width="10.5" height="1" fill="#8f1f22"/><rect x="2.75" y="15" width="10.5" height="1" fill="#0f1012"/></svg></span>
<span class="r o" style="left:244.07px;top:432px;letter-spacing:-0.306px">TurretBase</span>
<span class="r c" style="left:315.52px;top:432px;letter-spacing:0px">:</span>
<span class="ic" style="left:712px;top:455px"><svg width="16" height="16" viewBox="0 0 16 16"><rect x="1" y="4" width="13" height="10" rx="1.5" fill="#3d96f6"/><path d="M1 9V5.5a1.5 1.5 0 0 1 1.5-1.5h10a1.5 1.5 0 0 1 1.5 1.5v3.5z" fill="#5b9fe8"/><text x="7.5" y="12" font-size="7" font-weight="bold" text-anchor="middle" fill="#d2e5fc" fill-opacity="0.8" letter-spacing="-0.3">Var</text></svg></span>
<span class="r n" style="left:727.65px;top:452px;letter-spacing:-0.083px">Change the variable</span>
<span class="ic" style="left:855px;top:455px"><svg width="16" height="16" viewBox="0 0 16 16"><g fill="none" stroke="#56b6c2" stroke-width="1.15" stroke-linejoin="round" stroke-linecap="round"><path d="M7.4 4.7 L11.9 6.8 L11.9 10.2 M7.4 4.7 L2.9 6.8 L2.9 11.6 L6.9 13.5 M2.9 6.8 L7.4 8.9 L11.9 6.8 M7.4 8.9 L7.4 11.4"/><path d="M7.9 13.2c1-1.7 1.9-1.7 2.8-0.3s1.8 1.3 2.7-0.4"/></g></svg></span>
<span class="r v" style="left:871.05px;top:452px;letter-spacing:0.086px">IsTargetting</span>
<span class="r n" style="left:948.66px;top:452px;letter-spacing:0.6px">of</span>
<span class="ic" style="left:966px;top:455px"><svg width="16" height="16" viewBox="0 0 16 16"><path d="M2.2 5.6v5.6" stroke="#2d3a9a" stroke-width="1" stroke-dasharray="1 0.9" fill="none" opacity="0.6"/><rect x="2.8" y="6.8" width="6.8" height="4.9" rx="0.5" fill="#454648"/><rect x="2.8" y="6.8" width="6.8" height="1" fill="#8e3f3a"/><rect x="3.2" y="10.7" width="6" height="1" fill="#2f3033"/><rect x="8" y="8" width="1.2" height="2" fill="#3b8f27"/><rect x="9.6" y="7.5" width="5.3" height="1.9" fill="#1b1c20"/><rect x="9.6" y="7.8" width="5" height="1.3" fill="#b84a40"/></svg></span>
<span class="r o" style="left:982.38px;top:452px;letter-spacing:0.131px">TurretHead</span>
<span class="r c" style="left:1057.33px;top:452px;letter-spacing:0px">:</span>
<span class="r p" style="left:1065.33px;top:452px;letter-spacing:-0.068px">set to false</span>
<span class="ic" style="left:62px;top:456px"><svg width="16" height="16" viewBox="0 0 16 16"><defs><linearGradient id="ig1" x1="0" y1="0" x2="1" y2="1"><stop offset="0" stop-color="#ff86a2"/><stop offset="0.55" stop-color="#f0204f"/><stop offset="1" stop-color="#e3002f"/></linearGradient><linearGradient id="ig2" x1="0" y1="0" x2="1" y2="1"><stop offset="0" stop-color="#ff6f90"/><stop offset="0.5" stop-color="#ee1446"/><stop offset="1" stop-color="#e0002c"/></linearGradient></defs><path d="M4.7 5.4 L8.6 1.9 L8.5 3.6 C11.4 3.6 13.4 5.6 13.4 8.2 L13.2 9.8 L10.4 9.6 L10.5 8.2 C10.5 7.2 9.7 6.5 8.4 6.5 L8.3 8.2 Z" fill="url(#ig1)"/><path d="M10.7 12.3 L6.8 15.8 L6.9 14.1 C4 14.1 2 12.1 2 9.5 L2.2 7.9 L5 8.1 L4.9 9.5 C4.9 10.5 5.7 11.2 7 11.2 L7.1 9.5 Z" fill="url(#ig2)"/></svg></span>
<span class="ic" style="left:78px;top:456px"><svg width="16" height="16" viewBox="0 0 16 16"><path d="M5.6 7.6 L10 11.5" stroke="#191b22" stroke-width="1.25" fill="none"/><rect x="1.6" y="3.8" width="5.8" height="4" rx="0.5" fill="#6c8fde"/><rect x="8.7" y="11.1" width="5.6" height="4" rx="0.5" fill="#6c8fde"/><path d="M2.9 5.3h1.6M2.9 6.5h1.6M5.5 5v1.9" stroke="#4f6fc0" stroke-width="0.7" fill="none"/><path d="M10 12.6h1.6M10 13.8h1.6M12.6 12.3v1.9" stroke="#4f6fc0" stroke-width="0.7" fill="none"/><path d="M9.1 5.4c0-1.6 2.9-1.6 2.9 0c0 1.1-1.4 1-1.4 2.1M10.6 8.2v0.8" stroke="#2b2e38" stroke-width="1.15" fill="none"/></svg></span>
<span class="ic" style="left:95px;top:456px"><svg width="16" height="16" viewBox="0 0 16 16"><rect x="6.5" y="6.3" width="3" height="7.8" rx="1" fill="#5e5f60"/><path d="M6.5 8.1V7.3a1 1 0 0 1 1-1h1a1 1 0 0 1 1 1v0.8z" fill="#38393c"/><rect x="7.1" y="8.4" width="0.9" height="5.6" fill="#707172"/><rect x="2.75" y="14" width="10.5" height="1" fill="#8f1f22"/><rect x="2.75" y="15" width="10.5" height="1" fill="#0f1012"/></svg></span>
<span class="r o" style="left:112.17px;top:453px;letter-spacing:-0.306px">TurretBase</span>
<span class="r n" style="left:186.78px;top:453px;letter-spacing:0.06px">distance to</span>
<span class="ic" style="left:259px;top:456px"><svg width="16" height="16" viewBox="0 0 16 16"><path d="M2.1 13.6c0-4.3 2.5-6.7 5.9-6.7s5.9 2.4 5.9 6.7c0 1.7-2.4 2.5-5.9 2.5s-5.9-0.8-5.9-2.5z" fill="#e7262b"/><path d="M2.2 14c0.7 1.1 2.9 1.5 5.8 1.5s5.1-0.4 5.8-1.5c-0.2 1.5-2.5 2.1-5.8 2.1s-5.6-0.6-5.8-2.1z" fill="#b3121a"/><ellipse cx="6.6" cy="9.3" rx="2.7" ry="1.5" fill="#ff6f66"/><ellipse cx="6.3" cy="8.9" rx="1.4" ry="0.7" fill="#ffa79b"/><rect x="10.9" y="11" width="1.1" height="2.1" rx="0.5" fill="#2c0a10"/></svg></span>
<span class="r o" style="left:275.82px;top:453px;letter-spacing:-0.343px">RedSlime</span>
<span class="r n" style="left:341.12px;top:453px;letter-spacing:0.036px">is below</span>
<span class="r e" style="left:396.88px;top:453px;letter-spacing:0.025px">500</span>
<span class="r n" style="left:424.02px;top:453px;letter-spacing:-0.015px">pixels</span>
<span class="r a" style="left:711.17px;top:473px;letter-spacing:0.175px">Add action</span>
<span class="r a" style="left:62.38px;top:474px;letter-spacing:0.277px">Add condition</span>
<span class="r h" style="left:39.7px;top:498px;letter-spacing:0.796px">Z-ordering/Dividers</span>
<span class="ic" style="left:712px;top:535px"><svg width="16" height="16" viewBox="0 0 16 16"><rect x="4.4" y="3.2" width="6.5" height="5.7" rx="0.9" fill="#2f8fe6"/><path d="M4.4 5V4.1a0.9 0.9 0 0 1 0.9-0.9h4.7a0.9 0.9 0 0 1 0.9 0.9V5z" fill="#86c3f3"/><rect x="5.6" y="4.4" width="1.2" height="3.6" fill="#62b0f0" opacity="0.8"/><rect x="1.3" y="8.3" width="6.2" height="6.3" rx="0.9" fill="#de1f1c"/><path d="M1.3 10.1V9.2a0.9 0.9 0 0 1 0.9-0.9h4.4a0.9 0.9 0 0 1 0.9 0.9v0.9z" fill="#f0605a"/><rect x="2.5" y="9.6" width="1.1" height="3.6" fill="#f26a62" opacity="0.7"/><rect x="7.6" y="8.5" width="6.3" height="6.2" rx="0.9" fill="#24a31d"/><path d="M7.6 10.3V9.4a0.9 0.9 0 0 1 0.9-0.9h4.5a0.9 0.9 0 0 1 0.9 0.9v0.9z" fill="#5ccc52"/><rect x="10.6" y="9.8" width="1.1" height="3.6" fill="#5fd255" opacity="0.7"/></svg></span>
<span class="r n" style="left:727.45px;top:532px;letter-spacing:-0.048px">Create object</span>
<span class="ic" style="left:814px;top:535px"><svg width="16" height="16" viewBox="0 0 16 16"><rect x="6.5" y="6.3" width="3" height="7.8" rx="1" fill="#5e5f60"/><path d="M6.5 8.1V7.3a1 1 0 0 1 1-1h1a1 1 0 0 1 1 1v0.8z" fill="#38393c"/><rect x="7.1" y="8.4" width="0.9" height="5.6" fill="#707172"/><rect x="2.75" y="14" width="10.5" height="1" fill="#8f1f22"/><rect x="2.75" y="15" width="10.5" height="1" fill="#0f1012"/></svg></span>
<span class="r o" style="left:830.98px;top:532px;letter-spacing:-0.283px">TurretBase</span>
<span class="r n" style="left:905.48px;top:532px;letter-spacing:0.305px">at position</span>
<span class="r e" style="left:976.88px;top:532px;letter-spacing:-0.226px">Vat.X()-16;Vat.Y()-16</span>
<span class="r n" style="left:1105.53px;top:532px;letter-spacing:-0.008px">(layer:</span>
<span class="r g" style="left:1146.58px;top:532px;letter-spacing:-0.372px">Base layer</span>
<span class="r n" style="left:1210.78px;top:532px;letter-spacing:0px">)</span>
<span class="ic" style="left:40px;top:536px"><svg width="16" height="16" viewBox="0 0 16 16"><circle cx="8.05" cy="8.85" r="6.55" fill="#2b379d" stroke="#2f9fe3" stroke-width="1.2"/><path d="M3 6.5 A5.4 5.4 0 0 1 13.1 6.5 A9 9 0 0 0 3 6.5z" fill="#4a59c4" opacity="0.7"/><text x="7.8" y="13" font-size="11.5" font-weight="bold" text-anchor="middle" fill="#ffffff">1</text></svg></span>
<span class="r n" style="left:57.15px;top:533px;letter-spacing:-0.095px">Trigger once</span>
<span class="r a" style="left:40.17px;top:554px;letter-spacing:0.277px">Add condition</span>
<span class="ic" style="left:712px;top:557px"><svg width="16" height="16" viewBox="0 0 16 16"><rect x="4.4" y="3.2" width="6.5" height="5.7" rx="0.9" fill="#2f8fe6"/><path d="M4.4 5V4.1a0.9 0.9 0 0 1 0.9-0.9h4.7a0.9 0.9 0 0 1 0.9 0.9V5z" fill="#86c3f3"/><rect x="5.6" y="4.4" width="1.2" height="3.6" fill="#62b0f0" opacity="0.8"/><rect x="1.3" y="8.3" width="6.2" height="6.3" rx="0.9" fill="#de1f1c"/><path d="M1.3 10.1V9.2a0.9 0.9 0 0 1 0.9-0.9h4.4a0.9 0.9 0 0 1 0.9 0.9v0.9z" fill="#f0605a"/><rect x="2.5" y="9.6" width="1.1" height="3.6" fill="#f26a62" opacity="0.7"/><rect x="7.6" y="8.5" width="6.3" height="6.2" rx="0.9" fill="#24a31d"/><path d="M7.6 10.3V9.4a0.9 0.9 0 0 1 0.9-0.9h4.5a0.9 0.9 0 0 1 0.9 0.9v0.9z" fill="#5ccc52"/><rect x="10.6" y="9.8" width="1.1" height="3.6" fill="#5fd255" opacity="0.7"/></svg></span>
<span class="r n" style="left:727.45px;top:554px;letter-spacing:-0.048px">Create object</span>
<span class="ic" style="left:814px;top:557px"><svg width="16" height="16" viewBox="0 0 16 16"><path d="M2.2 5.6v5.6" stroke="#2d3a9a" stroke-width="1" stroke-dasharray="1 0.9" fill="none" opacity="0.6"/><rect x="2.8" y="6.8" width="6.8" height="4.9" rx="0.5" fill="#454648"/><rect x="2.8" y="6.8" width="6.8" height="1" fill="#8e3f3a"/><rect x="3.2" y="10.7" width="6" height="1" fill="#2f3033"/><rect x="8" y="8" width="1.2" height="2" fill="#3b8f27"/><rect x="9.6" y="7.5" width="5.3" height="1.9" fill="#1b1c20"/><rect x="9.6" y="7.8" width="5" height="1.3" fill="#b84a40"/></svg></span>
<span class="r o" style="left:830.98px;top:554px;letter-spacing:0.186px">TurretHead</span>
<span class="r n" style="left:910.17px;top:554px;letter-spacing:0.275px">at position</span>
<span class="r e" style="left:981.48px;top:554px;letter-spacing:-0.246px">Vat.X()-16;Vat.Y()-16</span>
<span class="r n" style="left:1109.92px;top:554px;letter-spacing:-0.042px">(layer:</span>
<span class="r g" style="left:1151.17px;top:554px;letter-spacing:-0.394px">Base layer</span>
<span class="r n" style="left:1215.08px;top:554px;letter-spacing:0px">)</span>
<span class="ic" style="left:711px;top:579px"><svg width="16" height="16" viewBox="0 0 16 16"><g fill="none" stroke="#bdbdb1" stroke-width="0.95" stroke-linecap="round" stroke-linejoin="round"><path d="M2.2 5.5 L4.6 6.9 M2.2 9.9 L4.6 8.5 M13.9 5.5 L11.5 6.9 M13.9 9.9 L11.5 8.5"/></g><path d="M4.3 7.7 H11.8" stroke="#cacabe" stroke-width="1.6" stroke-linecap="round" fill="none"/><path d="M5.4 7.6 H10.7" stroke="#f2f2ea" stroke-width="0.8" fill="none"/></svg></span>
<span class="r n" style="left:727.27px;top:576px;letter-spacing:0.0px">Link</span>
<span class="ic" style="left:758px;top:579px"><svg width="16" height="16" viewBox="0 0 16 16"><path d="M2.2 5.6v5.6" stroke="#2d3a9a" stroke-width="1" stroke-dasharray="1 0.9" fill="none" opacity="0.6"/><rect x="2.8" y="6.8" width="6.8" height="4.9" rx="0.5" fill="#454648"/><rect x="2.8" y="6.8" width="6.8" height="1" fill="#8e3f3a"/><rect x="3.2" y="10.7" width="6" height="1" fill="#2f3033"/><rect x="8" y="8" width="1.2" height="2" fill="#3b8f27"/><rect x="9.6" y="7.5" width="5.3" height="1.9" fill="#1b1c20"/><rect x="9.6" y="7.8" width="5" height="1.3" fill="#b84a40"/></svg></span>
<span class="r o" style="left:774.58px;top:576px;letter-spacing:0.019px">TurretHead</span>
<span class="r n" style="left:852.38px;top:576px;letter-spacing:0.413px">and</span>
<span class="ic" style="left:880px;top:579px"><svg width="16" height="16" viewBox="0 0 16 16"><rect x="6.5" y="6.3" width="3" height="7.8" rx="1" fill="#5e5f60"/><path d="M6.5 8.1V7.3a1 1 0 0 1 1-1h1a1 1 0 0 1 1 1v0.8z" fill="#38393c"/><rect x="7.1" y="8.4" width="0.9" height="5.6" fill="#707172"/><rect x="2.75" y="14" width="10.5" height="1" fill="#8f1f22"/><rect x="2.75" y="15" width="10.5" height="1" fill="#0f1012"/></svg></span>
<span class="r o" style="left:897.48px;top:576px;letter-spacing:-0.339px">TurretBase</span>
<span class="ic" style="left:712px;top:601px"><svg width="16" height="16" viewBox="0 0 16 16"><path d="M3.5 12 V6.6 H10" stroke="#f1f1f1" fill="none" stroke-width="1.2" stroke-linejoin="miter"/><path d="M9.4 4.6 L12.4 6.6 L9.4 8.6 Z" fill="#f1f1f1"/><circle cx="3.5" cy="12.9" r="1.45" fill="#f1f1f1"/></svg></span>
<span class="r n" style="left:727.45px;top:598px;letter-spacing:-0.138px">Change the scale of</span>
<span class="ic" style="left:853px;top:601px"><svg width="16" height="16" viewBox="0 0 16 16"><rect x="6.5" y="6.3" width="3" height="7.8" rx="1" fill="#5e5f60"/><path d="M6.5 8.1V7.3a1 1 0 0 1 1-1h1a1 1 0 0 1 1 1v0.8z" fill="#38393c"/><rect x="7.1" y="8.4" width="0.9" height="5.6" fill="#707172"/><rect x="2.75" y="14" width="10.5" height="1" fill="#8f1f22"/><rect x="2.75" y="15" width="10.5" height="1" fill="#0f1012"/></svg></span>
<span class="r o" style="left:870.98px;top:598px;letter-spacing:-0.417px">TurretBase</span>
<span class="r c" style="left:940.33px;top:598px;letter-spacing:0px">:</span>
<span class="r p" style="left:949.12px;top:598px;letter-spacing:0.23px">set to</span>
<span class="r e" style="left:989.4px;top:598px;letter-spacing:-0.287px">0.5</span>
<span class="ic" style="left:712px;top:623px"><svg width="16" height="16" viewBox="0 0 16 16"><path d="M3.5 12 V6.6 H10" stroke="#f1f1f1" fill="none" stroke-width="1.2" stroke-linejoin="miter"/><path d="M9.4 4.6 L12.4 6.6 L9.4 8.6 Z" fill="#f1f1f1"/><circle cx="3.5" cy="12.9" r="1.45" fill="#f1f1f1"/></svg></span>
<span class="r n" style="left:727.45px;top:620px;letter-spacing:-0.138px">Change the scale of</span>
<span class="ic" style="left:854px;top:623px"><svg width="16" height="16" viewBox="0 0 16 16"><path d="M2.2 5.6v5.6" stroke="#2d3a9a" stroke-width="1" stroke-dasharray="1 0.9" fill="none" opacity="0.6"/><rect x="2.8" y="6.8" width="6.8" height="4.9" rx="0.5" fill="#454648"/><rect x="2.8" y="6.8" width="6.8" height="1" fill="#8e3f3a"/><rect x="3.2" y="10.7" width="6" height="1" fill="#2f3033"/><rect x="8" y="8" width="1.2" height="2" fill="#3b8f27"/><rect x="9.6" y="7.5" width="5.3" height="1.9" fill="#1b1c20"/><rect x="9.6" y="7.8" width="5" height="1.3" fill="#b84a40"/></svg></span>
<span class="r o" style="left:870.98px;top:620px;letter-spacing:0.108px">TurretHead</span>
<span class="r c" style="left:945.12px;top:620px;letter-spacing:0px">:</span>
<span class="r p" style="left:953.52px;top:620px;letter-spacing:0.17px">set to</span>
<span class="r e" style="left:994.0px;top:620px;letter-spacing:-0.538px">0.5</span>
<span class="r a" style="left:711.17px;top:641px;letter-spacing:0.175px">Add action</span>
</div>
</body></html>
